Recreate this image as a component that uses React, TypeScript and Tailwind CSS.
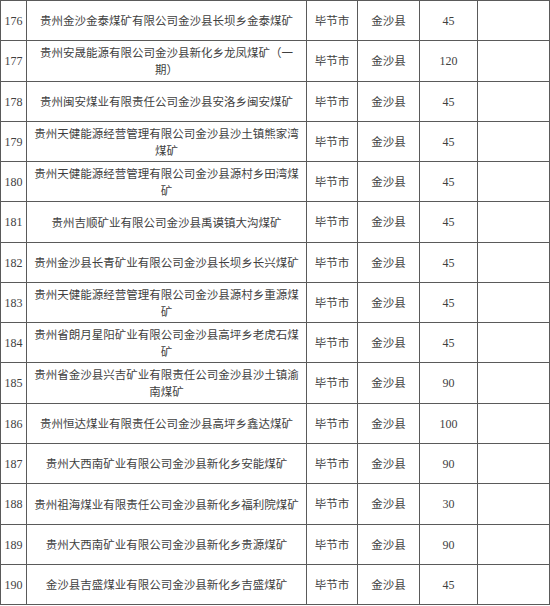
import React from "react";

const rows: { n: number; name: string; v: string }[] = [
  { n: 176, name: "贵州金沙金泰煤矿有限公司金沙县长坝乡金泰煤矿", v: "45" },
  { n: 177, name: "贵州安晟能源有限公司金沙县新化乡龙凤煤矿（一\n期）", v: "120" },
  { n: 178, name: "贵州闽安煤业有限责任公司金沙县安洛乡闽安煤矿", v: "45" },
  { n: 179, name: "贵州天健能源经营管理有限公司金沙县沙土镇熊家湾\n煤矿", v: "45" },
  { n: 180, name: "贵州天健能源经营管理有限公司金沙县源村乡田湾煤\n矿", v: "45" },
  { n: 181, name: "贵州吉顺矿业有限公司金沙县禹谟镇大沟煤矿", v: "45" },
  { n: 182, name: "贵州金沙县长青矿业有限公司金沙县长坝乡长兴煤矿", v: "45" },
  { n: 183, name: "贵州天健能源经营管理有限公司金沙县源村乡重源煤\n矿", v: "45" },
  { n: 184, name: "贵州省朗月星阳矿业有限公司金沙县高坪乡老虎石煤\n矿", v: "45" },
  { n: 185, name: "贵州省金沙县兴吉矿业有限责任公司金沙县沙土镇渝\n南煤矿", v: "90" },
  { n: 186, name: "贵州恒达煤业有限责任公司金沙县高坪乡鑫达煤矿", v: "100" },
  { n: 187, name: "贵州大西南矿业有限公司金沙县新化乡安能煤矿", v: "90" },
  { n: 188, name: "贵州祖海煤业有限责任公司金沙县新化乡福利院煤矿", v: "30" },
  { n: 189, name: "贵州大西南矿业有限公司金沙县新化乡贵源煤矿", v: "90" },
  { n: 190, name: "金沙县吉盛煤业有限公司金沙县新化乡吉盛煤矿", v: "45" },
];

const cjkCell =
  "bg-white flex items-center justify-center text-center text-[11.5px] font-['Noto_Sans_CJK_SC','Noto_Sans',sans-serif]";
const numCell =
  "bg-white flex items-center justify-center text-[12px] font-['Liberation_Serif','DejaVu_Serif',serif]";

export default function App() {
  return (
    <div className="w-[550px] h-[606px] bg-white overflow-hidden">
      <div className="grid w-[550px] grid-cols-[25px_279px_50px_61px_57px_71px] grid-rows-[39px_40px_39px_39px_39px_40px_39px_39px_39px_40px_39px_39px_40px_39px_39px] gap-px bg-[#5a5a5a] p-px text-[#3f3f3f]">
        {rows.map((r) => (
          <React.Fragment key={r.n}>
            <div className={numCell}>{r.n}</div>
            <div className={cjkCell + " whitespace-pre leading-[17px]"}>{r.name}</div>
            <div className={cjkCell}>毕节市</div>
            <div className={cjkCell}>金沙县</div>
            <div className={numCell}>{r.v}</div>
            <div className="bg-white" />
          </React.Fragment>
        ))}
      </div>
    </div>
  );
}
